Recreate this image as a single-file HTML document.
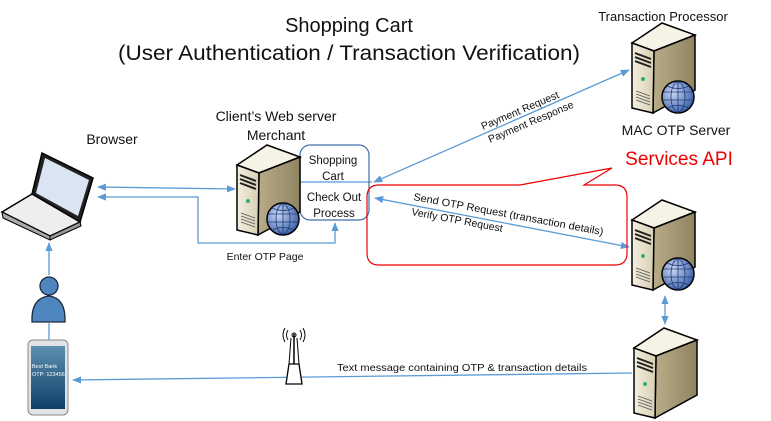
<!DOCTYPE html>
<html><head><meta charset="utf-8"><style>
html,body{margin:0;padding:0;background:#fff;}
svg{display:block;font-family:"Liberation Sans",sans-serif;}
</style></head><body>
<svg width="771" height="421" viewBox="0 0 771 421" xmlns="http://www.w3.org/2000/svg">
<defs>
<linearGradient id="fr" x1="0" x2="1"><stop offset="0" stop-color="#f4efe0"/><stop offset="1" stop-color="#d8ceb2"/></linearGradient>
<linearGradient id="sd" x1="0" x2="1"><stop offset="0" stop-color="#b9ac88"/><stop offset="1" stop-color="#8f8462"/></linearGradient>
<radialGradient id="gl" cx="0.35" cy="0.35" r="0.7"><stop offset="0" stop-color="#c9d7f2"/><stop offset="1" stop-color="#3c5fa8"/></radialGradient>
<linearGradient id="ph" x1="0" y1="0" x2="0" y2="1"><stop offset="0" stop-color="#5d8fb0"/><stop offset="1" stop-color="#0f3f66"/></linearGradient>
<marker id="a" viewBox="0 0 10 10" refX="9" refY="5" markerWidth="7" markerHeight="7" orient="auto-start-reverse"><path d="M0,1 L10,5 L0,9 z" fill="#5b9bd5"/></marker>
<g id="srv">
<polygon points="0,20 30,0 63,12 22,28" fill="#f6f2e6" stroke="#000" stroke-width="1.5"/>
<polygon points="22,28 63,12 63,67 21,90" fill="url(#sd)" stroke="#000" stroke-width="1.5"/>
<polygon points="0,20 22,28 21,90 0,85" fill="url(#fr)" stroke="#000" stroke-width="1.5"/>
<path d="M3,30 L19,36 M3,34 L19,40 M3,38 L19,44" stroke="#222" stroke-width="2"/>
<circle cx="11" cy="56" r="2" fill="#3a7"/>
<path d="M4,68 L18,73 M4,71 L18,76 M4,74 L18,79 M4,77 L18,82" stroke="#555" stroke-width="0.8"/>
</g>
<g id="glb">
<circle cx="0" cy="0" r="16" fill="url(#gl)" stroke="#000" stroke-width="1.5"/>
<ellipse cx="0" cy="0" rx="7" ry="15" fill="none" stroke="#1d3c7a" stroke-width="0.8"/>
<path d="M-15,-5 H15 M-16,3 H16 M0,-16 V16 M-11,-11 Q0,-6 11,-11 M-11,11 Q0,6 11,11" stroke="#1d3c7a" stroke-width="0.8" fill="none"/>
</g>
</defs>

<text x="349" y="32" font-size="20" text-anchor="middle" fill="#111">Shopping Cart</text>
<text x="349" y="60" font-size="21" text-anchor="middle" fill="#111" textLength="462" lengthAdjust="spacingAndGlyphs">(User Authentication / Transaction Verification)</text>

<g stroke="#5b9bd5" stroke-width="1.3" fill="none">
<line x1="98" y1="187" x2="235" y2="189" marker-start="url(#a)" marker-end="url(#a)"/>
<polyline points="98,197 198,197 198,243 335,243 335,223" marker-start="url(#a)" marker-end="url(#a)"/>
<line x1="374" y1="182" x2="629" y2="70" marker-start="url(#a)" marker-end="url(#a)"/>
<line x1="375" y1="198" x2="629" y2="247" marker-start="url(#a)" marker-end="url(#a)"/>
<line x1="665" y1="296" x2="665" y2="324" marker-start="url(#a)" marker-end="url(#a)"/>
<line x1="632" y1="373" x2="73" y2="380" marker-end="url(#a)"/>
<line x1="49" y1="275" x2="49" y2="243" marker-end="url(#a)"/>
<line x1="49" y1="323" x2="49" y2="341"/>
<line x1="300" y1="182" x2="372" y2="182"/>
</g>
<rect x="300" y="145" width="69" height="75" rx="10" fill="none" stroke="#3d6fa8" stroke-width="1.2"/>
<path d="M520,185 L379,185 Q367,185 367,197 L367,253 Q367,265 379,265 L615,265 Q627,265 627,253 L627,197 Q627,185 615,185 L584,185 L612,168 Z" fill="none" stroke="#e00" stroke-width="1.2"/>

<g font-size="12.5" fill="#111">
<text x="112" y="144" font-size="14" text-anchor="middle">Browser</text>
<text x="276" y="121" font-size="14" text-anchor="middle">Client’s Web server</text>
<text x="276" y="140" font-size="14" text-anchor="middle">Merchant</text>
<text x="333" y="164" font-size="11.5" text-anchor="middle">Shopping</text>
<text x="333" y="180" font-size="11.5" text-anchor="middle">Cart</text>
<text x="334" y="201" font-size="11.5" text-anchor="middle">Check Out</text>
<text x="334" y="217" font-size="11.5" text-anchor="middle">Process</text>
<text x="265" y="260" font-size="10.5" text-anchor="middle">Enter OTP Page</text>
<text x="663" y="21" font-size="13" text-anchor="middle">Transaction Processor</text>
<text x="676" y="135" font-size="14" text-anchor="middle">MAC OTP Server</text>
<text x="679" y="165" font-size="19" fill="#e00" text-anchor="middle">Services API</text>
<text x="462" y="371" font-size="10.5" text-anchor="middle" textLength="250" lengthAdjust="spacingAndGlyphs">Text message containing OTP &amp; transaction details</text>
<text font-size="10.5" transform="translate(483,130) rotate(-23)">Payment Request</text>
<text font-size="10.5" transform="translate(490,143) rotate(-23)">Payment Response</text>
<text font-size="10.5" transform="translate(413,200) rotate(10.5)" textLength="193" lengthAdjust="spacingAndGlyphs">Send OTP Request (transaction details)</text>
<text font-size="10.5" transform="translate(411,215) rotate(10.5)">Verify OTP Request</text>
</g>

<use href="#srv" x="632" y="23"/><use href="#glb" x="678" y="97"/>
<use href="#srv" x="632" y="200"/><use href="#glb" x="678" y="274"/>
<use href="#srv" x="634" y="328"/>
<use href="#srv" x="237" y="145"/><use href="#glb" x="283" y="219"/>

<polygon points="42,153 93,178 80,222 32,194" fill="#222" stroke="#000" stroke-width="1.5"/>
<polygon points="45,158 89,180 78,216 36,193" fill="#dbe4f3"/>
<polygon points="2,212 32,194 80,222 50,236" fill="#eee" stroke="#000" stroke-width="1.5"/>
<polygon points="2,212 50,236 50,240 3,218" fill="#aaa" stroke="#000" stroke-width="1"/>
<polygon points="50,236 80,222 81,226 50,240" fill="#999" stroke="#000" stroke-width="1"/>

<circle cx="49" cy="286" r="9" fill="#4f86c0" stroke="#1a2a40" stroke-width="1.3"/>
<path d="M32,322 Q31,298 49,296 Q66,298 65,322 Z" fill="#4f86c0" stroke="#1a2a40" stroke-width="1.3"/>

<rect x="28" y="340" width="40" height="75" rx="5" fill="#dfe3e6" stroke="#888"/>
<rect x="31" y="346" width="34" height="63" fill="url(#ph)"/>
<text x="32" y="368" font-size="5.5" fill="#fff">Best Bank</text>
<text x="32" y="376" font-size="5.5" fill="#fff">OTP: 123456</text>

<path d="M291,338 L289,364 M297,338 L299,364" stroke="#000" stroke-width="1"/>
<path d="M289,364 L299,364 L302,384 L286,384 Z" fill="#fff" stroke="#000" stroke-width="1.3"/>
<line x1="294" y1="334" x2="294" y2="364" stroke="#000" stroke-width="1.5"/>
<circle cx="294" cy="335" r="2" fill="none" stroke="#000"/>
<path d="M288,330 Q285,335 288,340 M300,330 Q303,335 300,340 M285,328 Q281,335 285,342 M303,328 Q307,335 303,342" fill="none" stroke="#000" stroke-width="0.9"/>
</svg>
</body></html>
